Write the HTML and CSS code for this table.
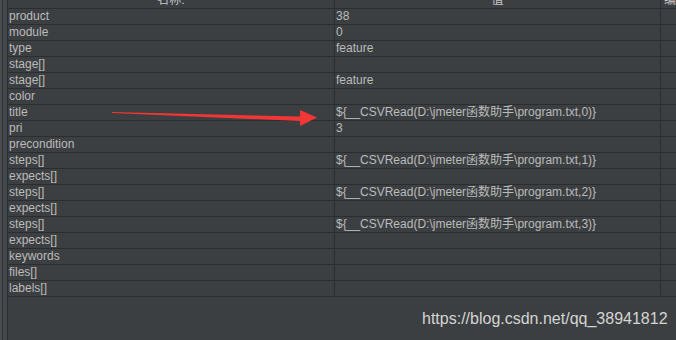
FILE: index.html
```html
<!DOCTYPE html>
<html>
<head>
<meta charset="utf-8">
<link rel="stylesheet" href="styles.css">
</head>
<body>
<div class="frame">
  <div class="gutter"><div class="gutter-line"></div></div>
  <div class="table">
    <div class="row head">
      <div class="cell"><span class="htext">名称:</span></div>
      <div class="cell"><span class="htext">值</span></div>
      <div class="cell last"><span class="htext left">编</span></div>
    </div>
    <div class="row"><div class="cell">product</div><div class="cell">38</div><div class="cell last"></div></div>
    <div class="row"><div class="cell">module</div><div class="cell">0</div><div class="cell last"></div></div>
    <div class="row"><div class="cell">type</div><div class="cell">feature</div><div class="cell last"></div></div>
    <div class="row"><div class="cell">stage[]</div><div class="cell"></div><div class="cell last"></div></div>
    <div class="row"><div class="cell">stage[]</div><div class="cell">feature</div><div class="cell last"></div></div>
    <div class="row"><div class="cell">color</div><div class="cell"></div><div class="cell last"></div></div>
    <div class="row"><div class="cell">title</div><div class="cell">${__CSVRead(D:\jmeter函数助手\program.txt,0)}</div><div class="cell last"></div></div>
    <div class="row"><div class="cell">pri</div><div class="cell">3</div><div class="cell last"></div></div>
    <div class="row"><div class="cell">precondition</div><div class="cell"></div><div class="cell last"></div></div>
    <div class="row"><div class="cell">steps[]</div><div class="cell">${__CSVRead(D:\jmeter函数助手\program.txt,1)}</div><div class="cell last"></div></div>
    <div class="row"><div class="cell">expects[]</div><div class="cell"></div><div class="cell last"></div></div>
    <div class="row"><div class="cell">steps[]</div><div class="cell">${__CSVRead(D:\jmeter函数助手\program.txt,2)}</div><div class="cell last"></div></div>
    <div class="row"><div class="cell">expects[]</div><div class="cell"></div><div class="cell last"></div></div>
    <div class="row"><div class="cell">steps[]</div><div class="cell">${__CSVRead(D:\jmeter函数助手\program.txt,3)}</div><div class="cell last"></div></div>
    <div class="row"><div class="cell">expects[]</div><div class="cell"></div><div class="cell last"></div></div>
    <div class="row"><div class="cell">keywords</div><div class="cell"></div><div class="cell last"></div></div>
    <div class="row"><div class="cell">files[]</div><div class="cell"></div><div class="cell last"></div></div>
    <div class="row"><div class="cell">labels[]</div><div class="cell"></div><div class="cell last"></div></div>
  </div>
</div>
<svg class="arrow" width="676" height="340" viewBox="0 0 676 340">
  <polygon points="112,112 300,116.5 300,110 317,117.5 300,126 300,121 112,113" fill="#f23535"/>
</svg>
<div class="watermark">https://blog.csdn.net/qq_38941812</div>
</body>
</html>
```
FILE: styles.css
```css
html, body {
  margin: 0;
  padding: 0;
  background: #3c3f41;
  width: 676px;
  height: 340px;
  overflow: hidden;
  font-family: "Liberation Sans", Arial, "Noto Sans CJK SC", sans-serif;
  font-size: 12px;
  color: #bbbbbb;
}
.frame {
  display: flex;
  height: 340px;
}
.gutter {
  width: 8px;
  flex: none;
  background: #45484a;
  border-left: 2px solid #4a4d4f;
  box-sizing: border-box;
  display: flex;
  box-shadow: inset -1px 0 0 #2b2d2e;
}
.gutter-line {
  width: 1px;
  background: #2f3133;
}
.table {
  flex: 1;
  display: flex;
  flex-direction: column;
}
.row {
  display: grid;
  grid-template-columns: 327px 326px 1fr;
  height: 16px;
  border-bottom: 1px solid #2b2d2e;
  box-sizing: border-box;
}
.row.head {
  height: 9px;
  overflow: hidden;
}
.cell {
  border-right: 1px solid #2b2d2e;
  padding-left: 1px;
  line-height: 15px;
  white-space: nowrap;
  overflow: hidden;
}
.cell.last {
  border-right: none;
}
.head .cell {
  text-align: center;
  padding-left: 0;
}
.htext {
  display: block;
  line-height: 16px;
  margin-top: -8px;
  color: #c8c8c8;
}
.htext.left {
  text-align: left;
  padding-left: 3px;
}
.arrow {
  position: absolute;
  left: 0;
  top: 0;
  pointer-events: none;
}
.watermark {
  position: absolute;
  left: 422px;
  top: 310px;
  font-size: 16px;
  color: #d4d4d4;
  font-family: "Liberation Sans", Arial, sans-serif;
}
```
